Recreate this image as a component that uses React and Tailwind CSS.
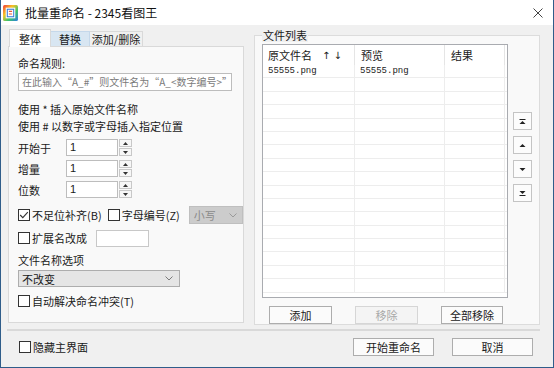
import React from "react";

function Check({ checked }) {
  return (
    <span className="w-[12px] h-[12px] border border-[#333333] bg-white flex items-center justify-center shrink-0">
      {checked && (
        <svg width="10" height="10" viewBox="0 0 10 10">
          <path d="M1.2 5 L3.8 7.6 L8.8 2.2" stroke="#333" strokeWidth="1.1" fill="none" />
        </svg>
      )}
    </span>
  );
}

function Spin({ label, className }) {
  return (
    <div className={"flex items-center h-[17px] " + (className || "")}>
      <span className="w-[48px]">{label}</span>
      <div className="w-[52px] h-[17px] border border-[#bdbdbd] bg-white pl-[3px] text-[11px] leading-[15px] [font-family:'Liberation_Sans',sans-serif]">1</div>
      <div className="ml-[1px] flex flex-col w-[13px] h-[17px] justify-between">
        <div className="h-[8px] border border-[#c8c8c8] bg-[#f7f7f7] flex items-center justify-center">
          <svg width="5" height="3" viewBox="0 0 5 3"><path d="M0 3 L2.5 0 L5 3 Z" fill="#333" /></svg>
        </div>
        <div className="h-[8px] border border-[#c8c8c8] bg-[#f7f7f7] flex items-center justify-center">
          <svg width="5" height="3" viewBox="0 0 5 3"><path d="M0 0 L2.5 3 L5 0 Z" fill="#333" /></svg>
        </div>
      </div>
    </div>
  );
}

function Chevron({ color }) {
  return (
    <svg width="8" height="5" viewBox="0 0 8 5">
      <path d="M0.5 0.5 L4 4 L7.5 0.5" stroke={color} strokeWidth="1" fill="none" />
    </svg>
  );
}

function Btn({ children, w, disabled }) {
  return (
    <div
      className={
        "h-[18px] flex items-center justify-center border text-[11px] leading-[14px] " +
        w +
        (disabled ? " border-[#d6d6d6] bg-[#f4f4f4] text-[#a8a8a8]" : " border-[#adadad] bg-[#fbfbfb] text-[#1a1a1a]")
      }
    >
      {children}
    </div>
  );
}

function ArrowBtn({ kind }) {
  return (
    <div className="w-[19px] h-[18px] border border-[#c4c4c4] bg-[#fcfcfc] flex items-center justify-center">
      <svg width="7" height="7" viewBox="0 0 7 7">
        {kind === "top" && (
          <>
            <rect x="0.5" y="1" width="6" height="1" fill="#222" />
            <path d="M0.5 6 L3.5 3 L6.5 6 Z" fill="#222" />
          </>
        )}
        {kind === "up" && <path d="M0.5 5 L3.5 2 L6.5 5 Z" fill="#222" />}
        {kind === "down" && <path d="M0.5 2 L3.5 5 L6.5 2 Z" fill="#222" />}
        {kind === "bottom" && (
          <>
            <path d="M0.5 1 L3.5 4 L6.5 1 Z" fill="#222" />
            <rect x="0.5" y="5" width="6" height="1" fill="#222" />
          </>
        )}
      </svg>
    </div>
  );
}

const rows = Array.from({ length: 17 }, (_, i) => i);

export default function App() {
  return (
    <div className="w-[554px] h-[368px] flex flex-col border-x border-b border-[#2f5d8a] bg-[#f0f0f0] text-[#1a1a1a] text-[11px] [font-family:'Noto_Sans_CJK_SC',sans-serif] overflow-hidden">
      {/* title bar */}
      <div className="h-[25px] bg-white flex items-center shrink-0">
        <svg className="ml-[2px]" width="15" height="16" viewBox="0 0 14 15">
          <defs>
            <linearGradient id="lg" x1="0" y1="0" x2="1" y2="1">
              <stop offset="0" stopColor="#f0383a" />
              <stop offset="0.35" stopColor="#f7c325" />
              <stop offset="0.65" stopColor="#3cc36a" />
              <stop offset="1" stopColor="#2a7be4" />
            </linearGradient>
          </defs>
          <rect x="0" y="0" width="14" height="15" rx="1.5" fill="url(#lg)" />
          <rect x="2.5" y="2.5" width="9" height="10" fill="#ffffff" />
          <rect x="4" y="4" width="6" height="7" fill="none" stroke="#3b7fd9" strokeWidth="1" />
          <path d="M5.5 6 L8.5 6 M5.5 8.5 L8.5 8.5" stroke="#e85a3a" strokeWidth="1" />
        </svg>
        <span className="ml-[7px] text-[12px] leading-[15px] text-[#111] whitespace-pre">批量重命名 - 2345看图王</span>
        <svg className="ml-auto mr-[10px]" width="10" height="10" viewBox="0 0 10 10">
          <path d="M0.5 0.5 L9.5 9.5 M9.5 0.5 L0.5 9.5" stroke="#444" strokeWidth="1" />
        </svg>
      </div>

      {/* main */}
      <div className="flex items-start">
        {/* left tab control */}
        <div className="ml-[7px] mt-[4px] w-[236px] flex flex-col">
          <div className="flex items-end h-[17px]">
            <div className="relative z-10 ml-[1px] mb-[-1px] w-[42px] h-[18px] bg-white border border-b-0 border-[#d9d9d9] flex items-center justify-center text-[11px] leading-[14px]">
              整体
            </div>
            <div className="w-[39px] h-[15px] bg-[#d8e6f2] border border-b-0 border-l-0 border-[#c5d8ea] flex items-center justify-center text-[11px] leading-[14px]">
              替换
            </div>
            <div className="w-[53px] h-[15px] bg-[#f0f0f0] border border-b-0 border-l-0 border-[#d9d9d9] flex items-center justify-center text-[11px] leading-[14px]">
              添加/删除
            </div>
          </div>
          <div className="h-[277px] border border-[#d9d9d9] bg-[#f9f9f9] pl-[9px] pt-[9px] flex flex-col leading-[14px]">
            <div className="h-[14px]">命名规则:</div>
            <div className="mt-[3px] w-[214px] h-[18px] border border-[#bdbdbd] bg-white pl-[3px] text-[10px] leading-[16px] text-[#7a7a7a] whitespace-nowrap overflow-hidden">
              在此输入“A_#”则文件名为“A_&lt;数字编号&gt;”
            </div>
            <div className="mt-[11px] h-[14px] whitespace-pre">使用 * 插入原始文件名称</div>
            <div className="mt-[3px] h-[14px] whitespace-pre">使用 # 以数字或字母插入指定位置</div>
            <Spin label="开始于" className="mt-[6px]" />
            <Spin label="增量" className="mt-[4px]" />
            <Spin label="位数" className="mt-[4px]" />
            <div className="mt-[8px] h-[18px] flex items-center">
              <Check checked />
              <span className="ml-[2px] whitespace-nowrap">不足位补齐(B)</span>
              <span className="ml-[6px]"><Check /></span>
              <span className="ml-[2px] whitespace-nowrap">字母编号(Z)</span>
              <div className="ml-[9px] w-[54px] h-[18px] bg-[#cccccc] border border-[#bfbfbf] flex items-center pl-[4px] pr-[5px] text-[#8a8a8a]">
                <span>小写</span>
                <span className="ml-auto flex"><Chevron color="#9a9a9a" /></span>
              </div>
            </div>
            <div className="mt-[5px] h-[18px] flex items-center">
              <Check />
              <span className="ml-[2px] whitespace-nowrap">扩展名改成</span>
              <div className="ml-[9px] w-[53px] h-[17px] border border-[#c8c8c8] bg-white" />
            </div>
            <div className="mt-[6px] h-[14px]">文件名称选项</div>
            <div className="mt-[3px] w-[162px] h-[17px] bg-[#e5e5e5] border border-[#adadad] flex items-center pl-[3px] pr-[6px]">
              <span>不改变</span>
              <span className="ml-auto flex"><Chevron color="#7a7a7a" /></span>
            </div>
            <div className="mt-[7px] h-[14px] flex items-center">
              <Check />
              <span className="ml-[2px] whitespace-nowrap">自动解决命名冲突(T)</span>
            </div>
          </div>
        </div>

        {/* right group box */}
        <fieldset className="ml-[10px] mt-[3px] w-[286px] h-[297px] border border-[#dcdcdc] bg-[#f9f9f9] pl-[7px] pt-[2px] pb-0 pr-0 flex flex-col">
          <legend className="px-[1px] text-[11px] leading-[14px] bg-[#f0f0f0]">文件列表</legend>
          <div className="flex">
            <div className="w-[246px] h-[254px] border border-[#a9abb0] bg-white flex flex-col overflow-hidden">
              <div className="h-[20px] flex shrink-0">
                <div className="w-[92px] border-r border-[#e5e5e5] flex items-center pl-[5px] pr-[12px]">
                  <span>原文件名</span>
                  <span className="ml-auto text-[10px] [font-family:'DejaVu_Sans',sans-serif] whitespace-pre">↑ ↓</span>
                </div>
                <div className="w-[90px] border-r border-[#e5e5e5] flex items-center pl-[6px]">预览</div>
                <div className="w-[60px] border-r border-[#e5e5e5] flex items-center pl-[6px]">结果</div>
              </div>
              {rows.map((i) => (
                <div key={i} className="h-[13.4px] flex shrink-0 border-b border-[#ededed]">
                  <div className="w-[92px] border-r border-[#ededed] pl-[5px] text-[9px] leading-[13px] [font-family:'Liberation_Mono',monospace]">
                    {i === 0 ? "55555.png" : ""}
                  </div>
                  <div className="w-[90px] border-r border-[#ededed] pl-[5px] text-[9px] leading-[13px] [font-family:'Liberation_Mono',monospace]">
                    {i === 0 ? "55555.png" : ""}
                  </div>
                  <div className="w-[60px] border-r border-[#ededed]" />
                </div>
              ))}
            </div>
            <div className="ml-[5px] pt-[68px] flex flex-col gap-[6px]">
              <ArrowBtn kind="top" />
              <ArrowBtn kind="up" />
              <ArrowBtn kind="down" />
              <ArrowBtn kind="bottom" />
            </div>
          </div>
          <div className="mt-[8px] ml-[7px] flex">
            <Btn w="w-[63px]">添加</Btn>
            <Btn w="w-[63px] ml-[23px]" disabled>移除</Btn>
            <Btn w="w-[62px] ml-[23px]">全部移除</Btn>
          </div>
        </fieldset>
      </div>

      {/* separator */}
      <div className="ml-[6px] mt-[4px] w-[533px] h-[2px] bg-[#d9d9d9]" />

      {/* bottom */}
      <div className="mt-[7px] flex items-center h-[18px]">
        <div className="ml-[18px] flex items-center">
          <Check />
          <span className="ml-[2px]">隐藏主界面</span>
        </div>
        <div className="ml-auto mr-[20px] flex">
          <Btn w="w-[81px]">开始重命名</Btn>
          <Btn w="w-[81px] ml-[18px]">取消</Btn>
        </div>
      </div>
    </div>
  );
}
